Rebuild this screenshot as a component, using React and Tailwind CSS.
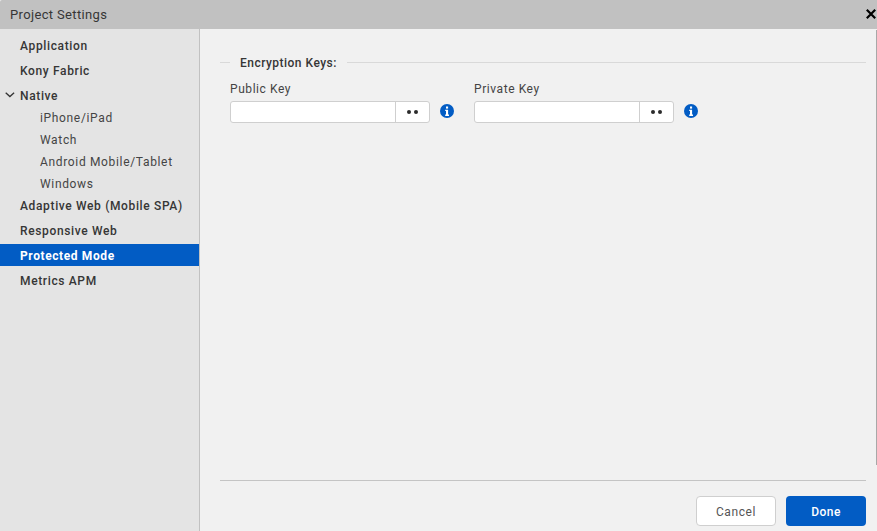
const NAV = [
  { label: "Application" },
  { label: "Kony Fabric" },
  {
    label: "Native",
    children: ["iPhone/iPad", "Watch", "Android Mobile/Tablet", "Windows"],
  },
  { label: "Adaptive Web (Mobile SPA)" },
  { label: "Responsive Web" },
  { label: "Protected Mode", active: true },
  { label: "Metrics APM" },
];

function Chevron() {
  return (
    <svg className="absolute left-[5px] top-[8px]" width="10" height="6" viewBox="0 0 10 6" fill="none">
      <path d="M0.7 0.8L4.9 4.6L9.1 0.8" stroke="#333" strokeWidth="1.3" />
    </svg>
  );
}

function NavItem({ item }) {
  return (
    <li className={item.children ? "" : "mb-[3px]"}>
      <div
        className={
          "relative flex h-[22px] items-center pt-[2px] pl-5 " +
          (item.active ? "bg-[#025cc4] font-bold tracking-[0.6px] text-white" : "font-medium tracking-[0.64px] text-[#363636]")
        }
      >
        {item.children && <Chevron />}
        {item.label}
      </div>
      {item.children && (
        <ul>
          {item.children.map((child) => (
            <li key={child} className="flex h-[22px] items-center pt-[2px] pl-10 tracking-[0.66px] text-[#444]">
              {child}
            </li>
          ))}
        </ul>
      )}
    </li>
  );
}

function InfoIcon() {
  return (
    <svg className="mt-[3px] ml-[10px] h-[14px] w-[14px]" viewBox="0 0 14 14">
      <circle cx="7" cy="7" r="7" fill="#025cc4" />
      <rect x="6" y="2.5" width="2.1" height="2.1" fill="#fff" />
      <path d="M5.2 5.7H8.1V10.6H9V11.9H5.2V10.6H6V7H5.2Z" fill="#fff" />
    </svg>
  );
}

function KeyField({ label }) {
  return (
    <div className="w-[244px]">
      <div className="h-[22px] leading-[20px] tracking-[0.57px] text-[#444]">{label}</div>
      <div className="flex">
        <div className="flex h-[22px] w-[200px] rounded-[3px] border border-[#cfcfcf] bg-white">
          <div className="w-[164px]" />
          <button className="flex flex-1 items-center justify-center gap-[3px] border-l border-[#cfcfcf] pr-px">
            <span className="h-1 w-1 rounded-full bg-[#2b2b2b]" />
            <span className="h-1 w-1 rounded-full bg-[#2b2b2b]" />
          </button>
        </div>
        <InfoIcon />
      </div>
    </div>
  );
}

export default function App() {
  return (
    <div className="flex h-[531px] w-[877px] flex-col overflow-hidden bg-[#f1f1f1] font-[Roboto,sans-serif] text-[12px]">
      <header className="flex h-[29px] shrink-0 items-center justify-between rounded-tl-[2px] bg-[#c1c1c1] pl-[10px] text-[13px] tracking-[0.35px] text-[#363636]">
        <span>Project Settings</span>
        <svg className="mr-px mb-px" width="10" height="10" viewBox="0 0 10 10">
          <path d="M0.8 0.8L9.2 9.2M9.2 0.8L0.8 9.2" stroke="#000" strokeWidth="2.2" />
        </svg>
      </header>
      <div className="flex flex-1">
        <nav className="w-[200px] shrink-0 border-r border-[#c1c1c1] bg-[#e4e4e4] pt-[5px]">
          <ul>
            {NAV.map((item) => (
              <NavItem key={item.label} item={item} />
            ))}
          </ul>
        </nav>
        <main className="flex w-[666px] flex-col pl-5">
          <div className="mt-[22px] flex h-[22px] items-center">
            <div className="h-px w-[10px] bg-[#d9d9d9]" />
            <h2 className="w-[117px] pt-[2px] pl-[10px] font-medium tracking-[0.48px] text-[#363636]">Encryption Keys:</h2>
            <div className="h-px flex-1 bg-[#d9d9d9]" />
          </div>
          <div className="mt-[6px] flex pl-[10px]">
            <KeyField label="Public Key" />
            <KeyField label="Private Key" />
          </div>
          <footer className="mt-auto flex h-[51px] justify-end gap-[10px] border-t border-[#c4c4c4] pt-[15px]">
            <button className="h-[30px] w-20 rounded-[4px] border border-[#cfcfcf] bg-white pt-[2px] tracking-[0.6px] text-[#555]">Cancel</button>
            <button className="h-[30px] w-20 rounded-[4px] bg-[#025cc4] pt-[2px] font-medium tracking-[0.5px] text-white">Done</button>
          </footer>
        </main>
        <div className="ml-auto mt-px h-[435px] w-px bg-[#a8a8a8]" />
      </div>
    </div>
  );
}
